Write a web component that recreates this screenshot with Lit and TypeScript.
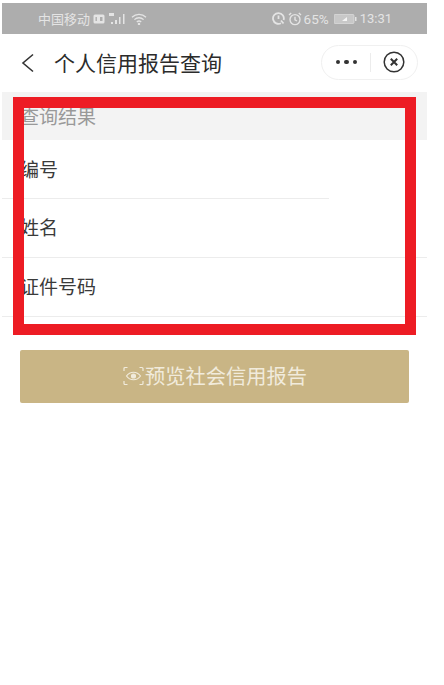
import { LitElement, html, css } from "lit";
import { customElement } from "lit/decorators.js";

@customElement("app-root")
export class AppRoot extends LitElement {
  static styles = css`
    :host {
      display: block;
      position: relative;
      width: 444px;
      height: 685px;
      overflow: hidden;
      background: #fff;
      font-family: "Noto Sans CJK SC", "Noto Sans", sans-serif;
      color: #333;
    }
    .screen {
      width: 425px;
      margin-left: 2px;
      padding-top: 3px;
    }
    .status {
      height: 31px;
      background: #adadad;
      display: flex;
      align-items: center;
      justify-content: space-between;
      padding: 0 35px 0 36px;
      color: #e4e4e4;
      font-size: 13px;
      line-height: 16px;
    }
    .status-side {
      display: flex;
      align-items: center;
      gap: 3px;
    }
    .time {
      font-family: Roboto, sans-serif;
      font-size: 13px;
    }
    .pct {
      font-family: Roboto, sans-serif;
      font-size: 13.5px;
      margin-left: -1px;
    }
    .status svg {
      display: block;
    }
    .battery {
      margin-left: 2px;
    }
    .nav {
      height: 58px;
      display: flex;
      align-items: center;
      padding: 0 9px 0 19px;
    }
    .back {
      display: block;
      margin-right: 20px;
      margin-bottom: 1px;
    }
    .title {
      flex: 1;
      font-size: 21px;
      line-height: 30px;
      color: #2b2b2b;
      padding-bottom: 2px;
    }
    .capsule {
      width: 95px;
      height: 33px;
      border: 1px solid #f0f0f0;
      border-radius: 18px;
      display: flex;
      align-items: center;
      margin-bottom: 2px;
    }
    .dots {
      width: 47px;
      display: flex;
      justify-content: center;
      gap: 4px;
      padding-left: 1px;
    }
    .dots i {
      width: 4.5px;
      height: 4.5px;
      border-radius: 50%;
      background: #333;
    }
    .sep {
      width: 1px;
      height: 19px;
      background: #ececec;
    }
    .close {
      margin-left: 12px;
      display: block;
    }
    .head {
      height: 48px;
      background: #f3f3f3;
      display: flex;
      align-items: center;
      padding-left: 18px;
      padding-bottom: 2px;
      font-size: 19px;
      color: #999;
      box-sizing: border-box;
    }
    .row {
      height: 59px;
      display: flex;
      align-items: center;
      padding-left: 18px;
      padding-bottom: 3px;
      font-size: 19px;
      color: #3a3a3a;
      box-sizing: border-box;
      border-bottom: 1px solid #ececec;
    }
    .row.short {
      border-bottom: none;
      position: relative;
    }
    .row.short .rule {
      position: absolute;
      left: 0;
      bottom: 0;
      width: 327px;
      height: 1px;
      background: #ececec;
    }
    .btn {
      margin: 33px 0 0 18px;
      width: 389px;
      height: 53px;
      background: #c9b585;
      border-radius: 2px;
      display: flex;
      align-items: center;
      justify-content: center;
      gap: 0;
      color: #f1ebdc;
      font-size: 20.25px;
      padding: 0 0 2px 0;
      box-sizing: border-box;
    }
    .btn svg {
      display: block;
    }
    .mark {
      position: absolute;
      left: 13px;
      top: 97px;
      width: 403px;
      height: 238px;
      border: 11px solid #ed1c24;
      box-sizing: border-box;
    }
  `;

  render() {
    return html`
      <div class="screen">
        <div class="status">
          <div class="status-side">
            <span>中国移动</span>
            <svg width="12" height="10" viewBox="0 0 12 10">
              <rect x="0.5" y="0.5" width="11" height="9" rx="1.5" fill="#e4e4e4" />
              <rect x="2.5" y="3" width="1.4" height="4" fill="#adadad" />
              <rect x="7" y="3" width="2.5" height="4" fill="#adadad" />
            </svg>
            <svg width="20" height="12" viewBox="0 0 20 12" fill="#e4e4e4">
              <rect x="1" y="0" width="5" height="3" />
              <rect x="3" y="9" width="2" height="2" />
              <rect x="7" y="7" width="2" height="4" />
              <rect x="11" y="4" width="1.5" height="7" />
              <rect x="15" y="1" width="1.5" height="10" />
            </svg>
            <svg width="16" height="12" viewBox="0 0 16 12" fill="none" stroke="#e4e4e4" stroke-width="1.3">
              <path d="M1 4.2a10 10 0 0 1 14 0" />
              <path d="M3.4 6.6a6.6 6.6 0 0 1 9.2 0" />
              <path d="M5.8 9a3.2 3.2 0 0 1 4.4 0" />
              <circle cx="8" cy="11" r="0.6" fill="#e4e4e4" />
            </svg>
          </div>
          <div class="status-side">
            <svg width="13" height="13" viewBox="0 0 13 13" fill="none" stroke="#e4e4e4" stroke-width="1.8">
              <path d="M9 11.2A5.4 5.4 0 1 1 11.6 8" />
              <path d="M6.5 3.5v3.5" />
              <path d="M9 8.5l2.5 3" />
            </svg>
            <svg width="14" height="14" viewBox="0 0 14 14" fill="none" stroke="#e4e4e4" stroke-width="1.4">
              <circle cx="7" cy="7.6" r="5" />
              <path d="M7 4.8v3l2 1.2M1 3l2.2-2M13 3l-2.2-2" />
            </svg>
            <span class="pct">65%</span>
            <svg class="battery" width="23" height="10" viewBox="0 0 23 10">
              <rect x="0" y="0.5" width="20" height="9" rx="1" fill="#c8c8c8" stroke="#e4e4e4" stroke-width="0.6" />
              <path d="M8 7l5-4v4z" fill="#f4f4f4" />
              <rect x="21" y="3" width="1.5" height="4" fill="#e4e4e4" />
            </svg>
            <span class="time">13:31</span>
          </div>
        </div>
        <div class="nav">
          <svg class="back" width="13" height="20" viewBox="0 0 13 20" fill="none" stroke="#333" stroke-width="1.6">
            <path d="M12 1.5L2 10l10 8.5" />
          </svg>
          <div class="title">个人信用报告查询</div>
          <div class="capsule">
            <div class="dots"><i></i><i></i><i></i></div>
            <div class="sep"></div>
            <svg class="close" width="22" height="22" viewBox="0 0 22 22" fill="none" stroke="#333">
              <circle cx="11" cy="11" r="9.8" stroke-width="1.5" />
              <path d="M7.8 7.8l6.4 6.4M14.2 7.8l-6.4 6.4" stroke-width="2" />
            </svg>
          </div>
        </div>
        <div class="head">查询结果</div>
        <div class="row short">编号<span class="rule"></span></div>
        <div class="row">姓名</div>
        <div class="row">证件号码</div>
        <div class="btn">
          <svg width="23" height="22" viewBox="0 0 22 22" fill="none" stroke="#f1ebdc" stroke-width="1.2">
            <path d="M5 2.5H2.5a1 1 0 0 0-1 1V6M17 2.5h2.5a1 1 0 0 1 1 1V6M5 19.5H2.5a1 1 0 0 1-1-1V16M17 19.5h2.5a1 1 0 0 0 1-1V16" />
            <path d="M4 11c3.6-5 10.4-5 14 0-3.6 5-10.4 5-14 0z" />
            <circle cx="11" cy="11" r="2" fill="#f1ebdc" />
          </svg>
          <span>预览社会信用报告</span>
        </div>
      </div>
      <div class="mark"></div>
    `;
  }
}
